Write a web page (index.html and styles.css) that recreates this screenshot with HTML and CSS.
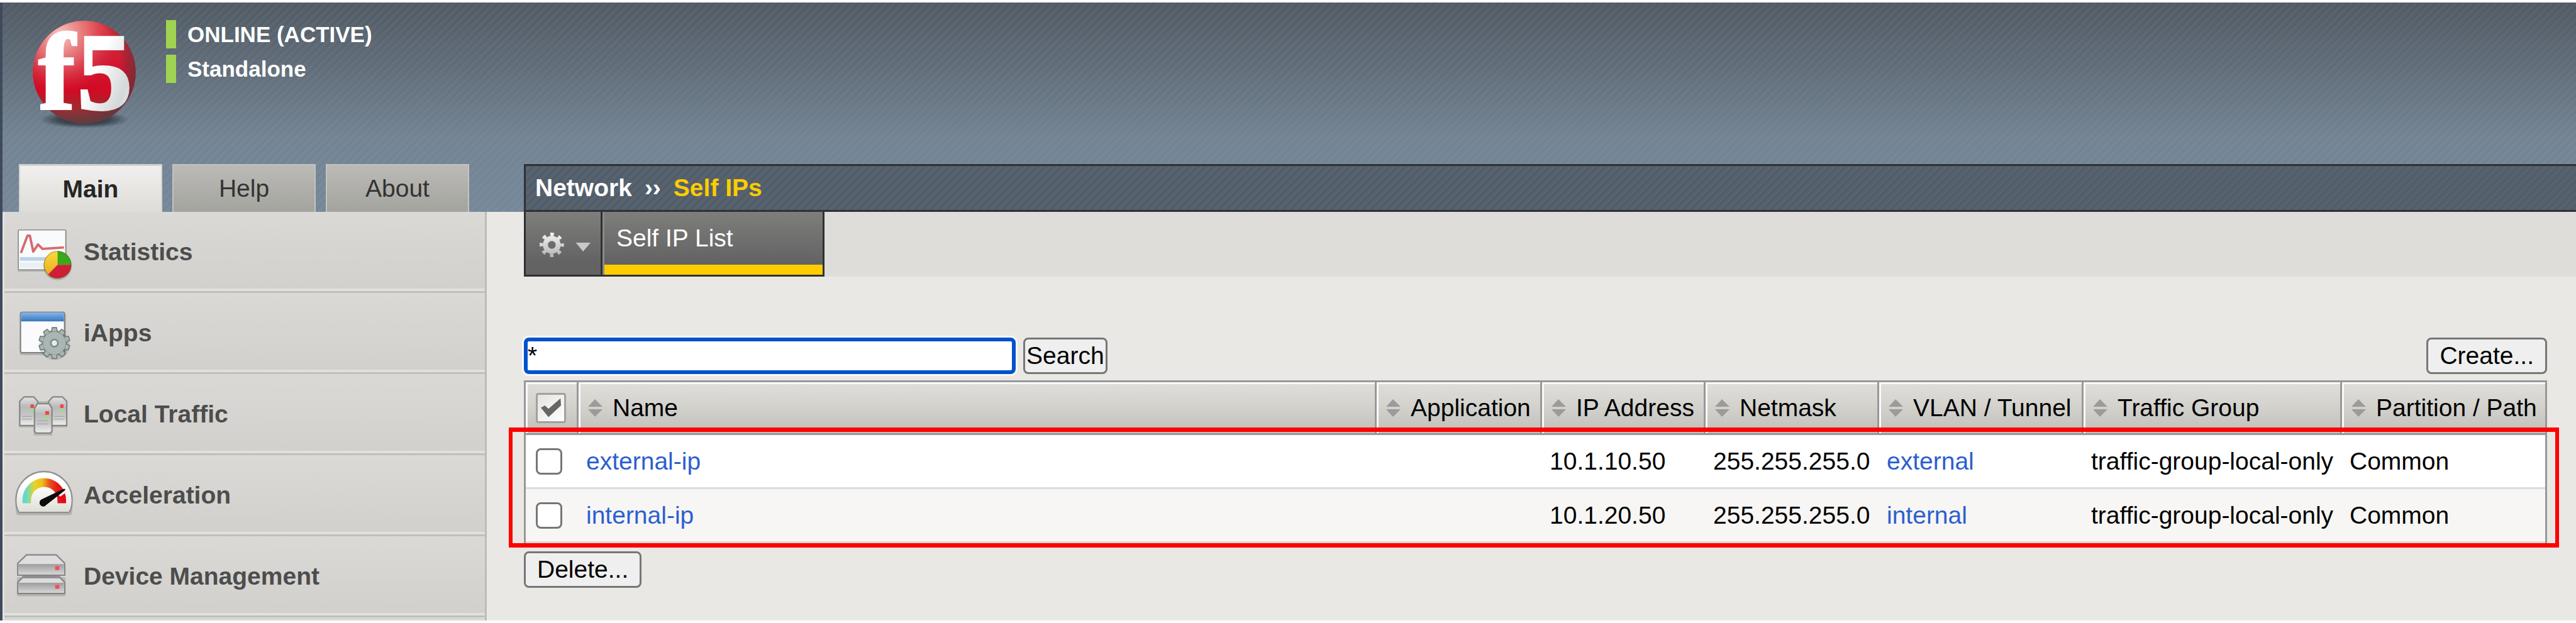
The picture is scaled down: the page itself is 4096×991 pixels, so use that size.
FILE: index.html
```html
<!DOCTYPE html>
<html lang="en">
<head>
<meta charset="utf-8">
<title>Network - Self IPs</title>
<link rel="stylesheet" href="styles.css">
</head>
<body>
<div class="page">
  <header class="banner">
    <div class="brand">
      <svg class="logo" viewBox="155 92 536 560" role="img" aria-label="f5">
        <defs>
          <linearGradient id="ball" x1="0" y1="0" x2="0" y2="1">
            <stop offset="0" stop-color="#d9303c"/>
            <stop offset=".3" stop-color="#d21f36"/>
            <stop offset=".68" stop-color="#d20a24"/>
            <stop offset=".84" stop-color="#a02a30"/>
            <stop offset="1" stop-color="#6e4446"/>
          </linearGradient>
          <radialGradient id="shine" cx=".27" cy=".14" r=".55">
            <stop offset="0" stop-color="#fbd5cf" stop-opacity=".95"/>
            <stop offset=".5" stop-color="#f09a94" stop-opacity=".55"/>
            <stop offset="1" stop-color="#e04050" stop-opacity="0"/>
          </radialGradient>
          <radialGradient id="rim" cx=".38" cy=".42" r=".64">
            <stop offset=".72" stop-color="#5a2a30" stop-opacity="0"/>
            <stop offset="1" stop-color="#5a3a3e" stop-opacity=".8"/>
          </radialGradient>
          <radialGradient id="shade">
            <stop offset="0" stop-color="#1c242c" stop-opacity=".95"/>
            <stop offset=".6" stop-color="#1c242c" stop-opacity=".6"/>
            <stop offset="1" stop-color="#1c242c" stop-opacity="0"/>
          </radialGradient>
          <linearGradient id="digit" x1="0" y1="0" x2="1" y2="1">
            <stop offset=".4" stop-color="#ffffff"/>
            <stop offset=".75" stop-color="#d4d8d8"/>
            <stop offset="1" stop-color="#f2f4f4"/>
          </linearGradient>
        </defs>
        <ellipse cx="423" cy="596" rx="225" ry="44" fill="url(#shade)"/>
        <circle cx="423" cy="359" r="258" fill="url(#ball)"/>
        <circle cx="423" cy="359" r="258" fill="url(#shine)"/>
        <circle cx="423" cy="359" r="258" fill="url(#rim)"/>
        <text class="logo-f" x="194" y="542">f</text>
        <text class="logo-5" x="388" y="542">5</text>
      </svg>
      <ul class="status">
        <li>ONLINE (ACTIVE)</li>
        <li>Standalone</li>
      </ul>
    </div>
    <div class="bar">
      <nav class="tabs" aria-label="Sections">
        <button class="tab tab-active" type="button">Main</button>
        <button class="tab" type="button">Help</button>
        <button class="tab" type="button">About</button>
      </nav>
      <h1 class="crumbs"><span>Network</span><span>››</span><span class="crumb-current">Self IPs</span></h1>
    </div>
  </header>

  <div class="columns">
    <nav class="sidebar" aria-label="Main">
      <a class="item" href="#statistics">
        <svg class="icon" viewBox="60 4 320 300" aria-hidden="true">
          <defs>
            <linearGradient id="yel" x1="0" y1="0" x2="0" y2="1"><stop offset="0" stop-color="#fadb3c"/><stop offset="1" stop-color="#e8a620"/></linearGradient>
          </defs>
          <rect x="88" y="42" width="246" height="208" rx="4" fill="#000" opacity=".16"/>
          <rect x="91" y="41" width="238" height="200" rx="3" fill="#f8fafb" stroke="#8d8d8d" stroke-width="5"/>
          <path d="M98 178h134v18H98z" fill="#bdd3ea"/>
          <path d="M98 205h130v26H98z" fill="#e9eff5"/>
          <path d="M104 157L137 70h12L166 150L190 114L212 136L320 129" fill="none" stroke="#d8696d" stroke-width="12" stroke-linejoin="round"/>
          <circle cx="288" cy="222" r="72" fill="#000" opacity=".18"/>
          <circle cx="288" cy="216" r="69" fill="url(#yel)"/>
          <path d="M288 216V147A69 69 0 0 1 357 216Z" fill="#3aa81c"/>
          <path d="M288 216H357A69 69 0 0 1 240 265Z" fill="#cf1f38"/>
          <circle cx="288" cy="216" r="67" fill="none" stroke="#5c4a20" stroke-opacity=".4" stroke-width="4"/>
        </svg>
        <span>Statistics</span>
      </a>
      <a class="item" href="#iapps">
        <svg class="icon" viewBox="60 410 320 300" aria-hidden="true">
          <defs>
            <linearGradient id="title" x1="0" y1="0" x2="0" y2="1"><stop offset="0" stop-color="#7db4ee"/><stop offset="1" stop-color="#3a76ba"/></linearGradient>
            <g id="teeth">
              <path id="tooth" d="M260 550L263 533H281L284 550Z"/>
              <use href="#tooth" transform="rotate(36 272 608)"/>
              <use href="#tooth" transform="rotate(72 272 608)"/>
              <use href="#tooth" transform="rotate(108 272 608)"/>
              <use href="#tooth" transform="rotate(144 272 608)"/>
              <use href="#tooth" transform="rotate(180 272 608)"/>
              <use href="#tooth" transform="rotate(216 272 608)"/>
              <use href="#tooth" transform="rotate(252 272 608)"/>
              <use href="#tooth" transform="rotate(288 272 608)"/>
              <use href="#tooth" transform="rotate(324 272 608)"/>
            </g>
          </defs>
          <rect x="98" y="458" width="232" height="210" rx="10" fill="#000" opacity=".16"/>
          <rect x="102" y="453" width="221" height="203" rx="8" fill="#fbfbfd" stroke="#777b80" stroke-width="6"/>
          <path d="M105 456H320V499H105Z" fill="url(#title)"/>
          <ellipse cx="272" cy="618" rx="76" ry="76" fill="#000" opacity=".13"/>
          <g fill="#a9b6b3" stroke="#6f7b79" stroke-width="10"><use href="#teeth"/><circle cx="272" cy="608" r="58"/></g>
          <g fill="#a9b6b3"><use href="#teeth"/><circle cx="272" cy="608" r="57"/></g>
          <circle cx="272" cy="608" r="18" fill="#e6e8ea" stroke="#7d8987" stroke-width="8"/>
        </svg>
        <span>iApps</span>
      </a>
      <a class="item" href="#local-traffic">
        <svg class="icon" viewBox="60 -23 320 300" aria-hidden="true">
          <defs>
            <linearGradient id="case" x1="0" y1="0" x2="0" y2="1"><stop offset="0" stop-color="#e4e4e4"/><stop offset=".35" stop-color="#b9b9b9"/><stop offset=".7" stop-color="#c9c9c9"/><stop offset="1" stop-color="#f0f0f0"/></linearGradient>
          </defs>
          <path d="M94 60H336V192H262V232H168V192H94Z" fill="#000" opacity=".14"/>
          <g fill="url(#case)" stroke="#868686" stroke-width="7" stroke-linejoin="round">
            <path d="M98 60L120 38H168L190 62V182H98Z"/>
            <path d="M242 62L264 38H312L334 60V182H242Z"/>
            <path d="M186 72H246L260 96V210L252 220H180L172 210V96Z"/>
          </g>
          <g stroke="#a6a6a6" stroke-width="4"><path d="M110 136H160M110 150H160M270 136H324M270 150H324M186 158H240M186 174H240"/></g>
          <g fill="#e8474c"><path d="M152 76h17v18h-17zM301 76h17v18h-17zM226 110h19v18h-19z"/></g>
          <g fill="#9fdc80"><path d="M153 98h15v16h-15zM302 98h15v16h-15zM227 132h17v16h-17z"/></g>
        </svg>
        <span>Local Traffic</span>
      </a>
      <a class="item" href="#acceleration">
        <svg class="icon" viewBox="60 383 320 300" aria-hidden="true">
          <defs>
            <linearGradient id="dial" x1="0" y1="0" x2="0" y2="1"><stop offset=".3" stop-color="#ffffff"/><stop offset="1" stop-color="#deded8"/></linearGradient>
            <linearGradient id="heat" gradientUnits="userSpaceOnUse" x1="112" y1="0" x2="330" y2="0"><stop offset=".08" stop-color="#62dacb"/><stop offset=".27" stop-color="#e4d32c"/><stop offset=".45" stop-color="#f0bf1c"/><stop offset=".62" stop-color="#e8541c"/><stop offset=".8" stop-color="#e21b1b"/><stop offset="1" stop-color="#e00614"/></linearGradient>
          </defs>
          <path d="M80 622C70 560 78 420 220 418C362 420 370 560 360 622Q358 632 346 632H94Q82 632 80 622Z" fill="#000" opacity=".14"/>
          <path d="M92 614Q78 590 79 553A141 141 0 0 1 361 553Q362 590 348 614Q346 617 342 617H98Q94 617 92 614Z" fill="url(#dial)" stroke="#909090" stroke-width="7"/>
          <path d="M133 571V555A88 88 0 0 1 309 555V571" fill="none" stroke="url(#heat)" stroke-width="43"/>
          <path d="M286 522L338 488L342 508L302 538Z" fill="#f7f7f4"/>
          <path d="M205 553L318 499Q328 497 326 505L232 579A19 19 0 1 1 205 553Z" fill="#0c0c0c"/>
        </svg>
        <span>Acceleration</span>
      </a>
      <a class="item" href="#device-management">
        <svg class="icon" viewBox="60 788 320 300" aria-hidden="true">
          <defs>
            <linearGradient id="front" x1="0" y1="0" x2="0" y2="1"><stop offset="0" stop-color="#9c9c9c"/><stop offset="1" stop-color="#d6d6d6"/></linearGradient>
          </defs>
          <rect x="84" y="940" width="244" height="96" rx="8" fill="#000" opacity=".14"/>
          <g stroke="#858585" stroke-width="7" stroke-linejoin="round">
            <path d="M88 966L118 936H294L324 966V1022H88Z" fill="#dcdcdc"/>
            <path d="M88 870L132 828H282L324 870V930H88Z" fill="#dedede"/>
          </g>
          <path d="M92 874H320V926H92Z" fill="url(#front)"/>
          <path d="M92 968H320V1018H92Z" fill="url(#front)"/>
          <path d="M112 934H300L310 946H102Z" fill="#909090"/>
          <path d="M276 884h21v20h-21zM276 978h21v20h-21z" fill="#f0505a"/>
        </svg>
        <span>Device Management</span>
      </a>
    </nav>

    <main class="main">
      <div class="strip">
        <button class="gear" type="button" aria-label="Preferences">
          <svg class="gear-icon" viewBox="122 385 255 122" aria-hidden="true">
            <defs>
              <linearGradient id="silver" gradientUnits="userSpaceOnUse" x1="0" y1="385" x2="0" y2="507"><stop offset="0" stop-color="#f4f4f4"/><stop offset="1" stop-color="#b4b4b4"/></linearGradient>
            </defs>
            <circle cx="183" cy="446" r="32" fill="none" stroke="url(#silver)" stroke-width="25"/>
            <circle cx="183" cy="446" r="52" fill="none" stroke="url(#silver)" stroke-width="18" stroke-dasharray="18 22.84" stroke-dashoffset="9"/>
            <path d="M303 435H377L340 479Z" fill="#c8c8c8"/>
          </svg>
        </button>
        <a class="view" href="#self-ip-list">Self IP List</a>
      </div>

      <div class="content">
        <form class="tools" onsubmit="return false">
          <input class="query" type="text" value="*" aria-label="Search self IPs">
          <button class="btn btn-search" type="submit">Search</button>
          <button class="btn btn-create" type="button">Create...</button>
        </form>

        <svg class="symbols" aria-hidden="true">
          <symbol id="sort" viewBox="0 0 23 28"><path d="M11 0L23 12H0ZM0 16H23L11 28Z" fill="#9b9b99"/></symbol>
        </svg>

        <div class="grid">
          <table class="table">
            <colgroup>
              <col class="c-check"><col><col class="c-app"><col class="c-ip"><col class="c-mask"><col class="c-vlan"><col class="c-group"><col class="c-path">
            </colgroup>
            <thead>
              <tr>
                <th><input class="check check-all" type="checkbox" checked aria-label="Select all"></th>
                <th><span class="head"><svg class="sort"><use href="#sort"/></svg>Name</span></th>
                <th><span class="head"><svg class="sort"><use href="#sort"/></svg>Application</span></th>
                <th><span class="head"><svg class="sort"><use href="#sort"/></svg>IP Address</span></th>
                <th><span class="head"><svg class="sort"><use href="#sort"/></svg>Netmask</span></th>
                <th><span class="head"><svg class="sort"><use href="#sort"/></svg>VLAN / Tunnel</span></th>
                <th><span class="head"><svg class="sort"><use href="#sort"/></svg>Traffic Group</span></th>
                <th><span class="head"><svg class="sort"><use href="#sort"/></svg>Partition / Path</span></th>
              </tr>
            </thead>
            <tbody>
              <tr>
                <td><input class="check" type="checkbox" aria-label="Select external-ip"></td>
                <td><a href="#external-ip">external-ip</a></td>
                <td></td>
                <td>10.1.10.50</td>
                <td>255.255.255.0</td>
                <td><a href="#external">external</a></td>
                <td>traffic-group-local-only</td>
                <td>Common</td>
              </tr>
              <tr>
                <td><input class="check" type="checkbox" aria-label="Select internal-ip"></td>
                <td><a href="#internal-ip">internal-ip</a></td>
                <td></td>
                <td>10.1.20.50</td>
                <td>255.255.255.0</td>
                <td><a href="#internal">internal</a></td>
                <td>traffic-group-local-only</td>
                <td>Common</td>
              </tr>
            </tbody>
          </table>
          <div class="highlight"></div>
        </div>

        <button class="btn" type="button">Delete...</button>
      </div>
    </main>
  </div>
</div>
</body>
</html>
```

FILE: styles.css
```css
* {
  box-sizing: border-box;
}

body {
  margin: 0;
  padding: 4px 0;
  min-height: 100vh;
  display: flex;
  flex-direction: column;
  background: #ffffff;
  color: #000000;
  font: 39px/44px "Liberation Sans", Arial, sans-serif;
}

button,
input {
  font: inherit;
  color: inherit;
  margin: 0;
}

a {
  color: #2c5fcf;
  text-decoration: none;
}

.page {
  flex: 1;
  display: flex;
  flex-direction: column;
  border-left: 4px solid #3f4b5c;
  background: #e9e8e4;
}

/* Banner */
.banner {
  background:
    repeating-linear-gradient(135deg, rgba(255, 255, 255, 0) 0, rgba(255, 255, 255, 0.05) 5px, rgba(255, 255, 255, 0) 9px),
    linear-gradient(#4f5964, #5f6b77 30%, #718292 65%, #748698);
}

.brand {
  display: flex;
  align-items: flex-start;
  height: 257px;
  padding: 26px 0 0 45px;
}

.logo {
  width: 170px;
  height: 178px;
  overflow: visible;
}

.logo-f,
.logo-5 {
  font-family: "Liberation Serif", serif;
  font-weight: bold;
  font-size: 550px;
  fill: #ffffff;
  stroke: #ffffff;
  stroke-width: 12px;
}

.logo-5 {
  fill: url(#digit);
  stroke: url(#digit);
}

.status {
  display: flex;
  flex-direction: column;
  gap: 10px;
  margin: 2px 0 0 45px;
  padding: 0;
  list-style: none;
  color: #ffffff;
  font-size: 35px;
  font-weight: bold;
}

.status li {
  border-left: 16px solid #9fd351;
  padding-left: 18px;
  line-height: 45px;
}

.bar {
  display: flex;
  height: 76px;
}

.tabs {
  flex: none;
  display: flex;
  gap: 16px;
  width: 829px;
  padding-left: 26px;
}

.tab {
  width: 228px;
  border: 2px solid #c4c3c0;
  border-bottom: 0;
  padding: 0;
  background: linear-gradient(#bbbab6, #a4a49f);
  color: #333333;
}

.tab-active {
  border-top: 3px solid #c9c8c4;
  border-color: #d4d3cf;
  background: linear-gradient(#f1f0ee, #dddcd8);
  color: #262626;
  font-weight: bold;
}

.crumbs {
  flex: 1;
  display: flex;
  align-items: center;
  gap: 20px;
  margin: 0;
  padding-left: 15px;
  border: 3px solid #2f3133;
  border-right: 0;
  background:
    repeating-linear-gradient(135deg, rgba(255, 255, 255, 0) 0, rgba(255, 255, 255, 0.05) 5px, rgba(255, 255, 255, 0) 9px),
    #505c68;
  color: #ffffff;
  font-size: 39px;
}

.crumb-current {
  color: #ffcc00;
}

/* Sidebar */
.columns {
  flex: 1;
  display: flex;
}

.sidebar {
  flex: none;
  width: 770px;
  border-right: 3px solid #bcbcbb;
  border-left: 3px solid #e3e2de;
  background: #d9d8d4;
}

.item {
  display: flex;
  align-items: center;
  gap: 12px;
  height: 129px;
  padding: 2px 0 0 12px;
  border-bottom: 3px solid #bfbfbf;
  box-shadow: inset 0 -4px #e1e0dc;
  background: linear-gradient(#dad9d5, #d1d0cc);
  color: #4d4d4d;
  font-weight: bold;
}

.icon {
  width: 102px;
  height: 95px;
}

/* Main column */
.main {
  flex: 1;
  padding-left: 59px;
}

.strip {
  display: flex;
  height: 103px;
  background: #dedddA;
}

.gear,
.view {
  border: 3px solid #2f3031;
  border-top: 0;
  background: linear-gradient(#7e7e7c, #636363 80%);
}

.gear {
  display: flex;
  align-items: center;
  width: 125px;
  padding: 4px 0 0 22px;
}

.gear-icon {
  width: 81px;
  height: 39px;
}

.view {
  display: flex;
  align-items: center;
  width: 353px;
  border-left: 0;
  padding: 0 0 16px 22px;
  box-shadow: inset 3px 0 #8a8a89, inset 0 -16px #ffcc00;
  color: #ffffff;
}

.content {
  padding: 97px 46px 0 0;
}

.tools {
  display: flex;
  height: 58px;
  margin-bottom: 10px;
}

.query {
  width: 782px;
  padding: 0;
  border: 6px solid #0052cc;
  border-radius: 8px;
  outline: 0;
  background: #ffffff;
  box-shadow: 0 0 0 3px #f8f8f7;
}

.btn {
  height: 58px;
  padding: 0 18px;
  border: 3px solid #767676;
  border-radius: 8px;
  background: #efefef;
}

.btn-search {
  margin-left: 12px;
  padding: 0 2px;
}

.btn-create {
  margin-left: auto;
}

.symbols {
  display: none;
}

/* Table */
.grid {
  position: relative;
  margin-bottom: 13px;
}

.table {
  width: 100%;
  table-layout: fixed;
  border: 3px solid #989898;
  border-bottom: 0;
  border-spacing: 0;
}

.c-check { width: 84px; }
.c-app { width: 263px; }
.c-ip { width: 260px; }
.c-mask { width: 276px; }
.c-vlan { width: 325px; }
.c-group { width: 411px; }
.c-path { width: 323px; }

th {
  height: 84px;
  padding: 0 0 0 15px;
  border-right: 3px solid #989898;
  border-bottom: 3px solid #989898;
  background: linear-gradient(#dfdeda, #d5d4cf 40%, #c0bfba);
  box-shadow: inset 3px 3px #fafafa;
  font-weight: normal;
  text-align: left;
  white-space: nowrap;
}

th:last-child {
  border-right: 0;
}

.head {
  display: flex;
  align-items: center;
  gap: 16px;
}

.sort {
  width: 23px;
  height: 28px;
}

td {
  height: 86px;
  padding: 0 0 0 12px;
  border-bottom: 3px solid #dcdcdc;
  background: #ffffff;
  white-space: nowrap;
}

tbody tr:nth-child(even) td {
  background: #f7f6f4;
}

th:first-child,
td:first-child {
  padding-left: 16px;
}

.check {
  appearance: none;
  display: block;
  width: 42px;
  height: 42px;
  border: 3px solid #767676;
  border-radius: 8px;
  background: #ffffff;
}

.check-all {
  width: 48px;
  height: 48px;
  border-color: #a0a0a0;
  border-radius: 4px;
  background: linear-gradient(135deg, #e4e3df, #ffffff);
}

.check-all::before {
  content: "";
  display: block;
  width: 32px;
  height: 30px;
  margin: 6px 5px;
  background: #666666;
  clip-path: polygon(0 50%, 20% 38%, 38% 56%, 98% 0, 100% 38%, 38% 100%);
}

.highlight {
  position: absolute;
  inset: 75px -19px -7px -24px;
  border: solid #ff0000;
  border-width: 7px 6px;
  pointer-events: none;
}
```
